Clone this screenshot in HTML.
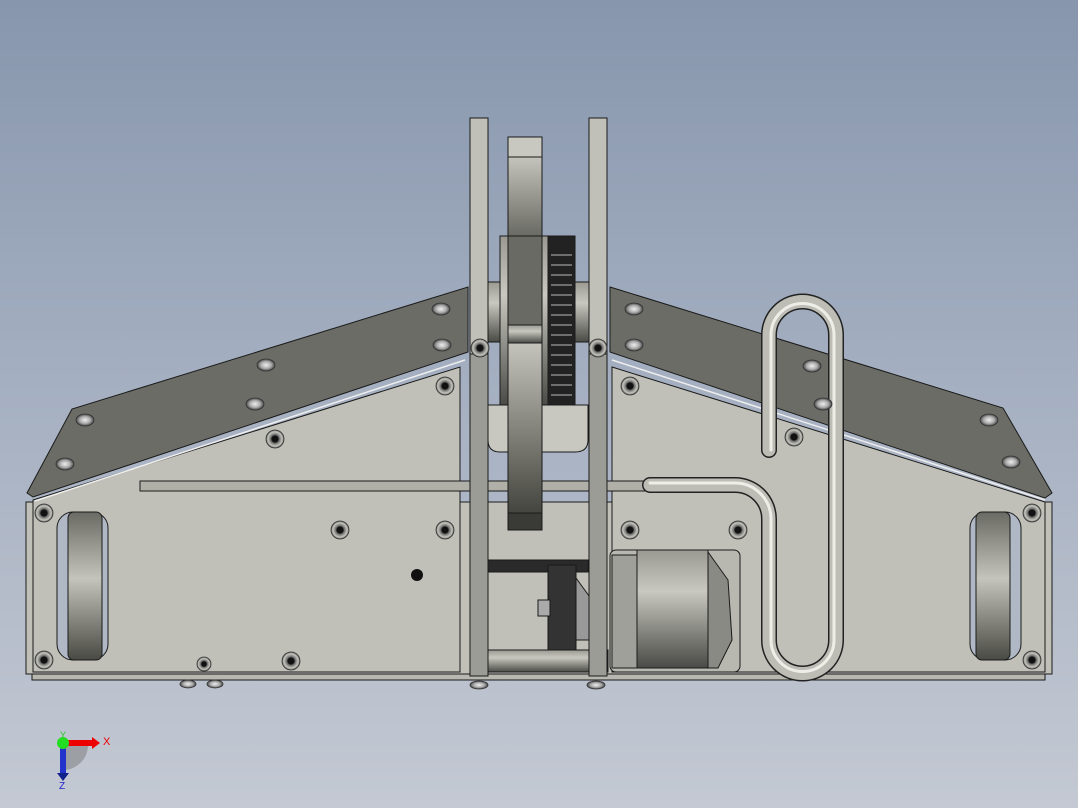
<!DOCTYPE html>
<html><head><style>
html,body{margin:0;padding:0;width:1078px;height:808px;overflow:hidden}
body{background:linear-gradient(#8796ad 0%,#a3aec0 45%,#c4c9d3 100%)}
svg{position:absolute;left:0;top:0}
text{font-family:"Liberation Sans",sans-serif}
</style></head><body>
<svg width="1078" height="808" viewBox="0 0 1078 808">
<defs>
<linearGradient id="cyl" x1="0" x2="0" y1="0" y2="1">
<stop offset="0" stop-color="#9a9a92"/><stop offset=".35" stop-color="#c8c8c0"/><stop offset="1" stop-color="#4a4a46"/></linearGradient>
<linearGradient id="whl" x1="0" x2="0" y1="0" y2="1">
<stop offset="0" stop-color="#6a6a64"/><stop offset=".45" stop-color="#c4c4bc"/><stop offset="1" stop-color="#4a4a44"/></linearGradient>
<linearGradient id="dg" x1="0" x2="0" y1="0" y2="1">
<stop offset="0" stop-color="#c4c4bc"/><stop offset="1" stop-color="#6a6a64"/></linearGradient>
<linearGradient id="dg2" x1="0" x2="0" y1="0" y2="1">
<stop offset="0" stop-color="#c4c4bc"/><stop offset="1" stop-color="#45453f"/></linearGradient>
<radialGradient id="scr"><stop offset=".35" stop-color="#111"/><stop offset=".45" stop-color="#666"/><stop offset=".8" stop-color="#c8c8c0"/><stop offset="1" stop-color="#555"/></radialGradient>
<radialGradient id="bt"><stop offset="0" stop-color="#eee"/><stop offset=".6" stop-color="#aaa"/><stop offset="1" stop-color="#444"/></radialGradient>
</defs>
<g stroke="#1a1a1a" stroke-width="1">
<rect x="26" y="502" width="1026" height="172" fill="#c0c0b8"/>
<rect x="32" y="674" width="1013" height="6" fill="#b8b8b0"/>
<polygon points="33,500 460,367 460,672 33,672" fill="#c0c0b8"/>
<polygon points="612,367 1045,502 1045,672 612,672" fill="#c0c0b8"/>
<polygon points="27,493 72,409 468,287 468,352 33,497" fill="#6c6c66"/>
<polygon points="610,287 1003,408 1052,493 1045,498 610,352" fill="#6c6c66"/>
<line x1="35" y1="501" x2="465" y2="360" stroke="#eee" stroke-width="1.5"/>
<line x1="612" y1="360" x2="1045" y2="500" stroke="#eee" stroke-width="1.5"/>
<rect x="57" y="512" width="51" height="148" rx="16" fill="#b0b8c6"/>
<rect x="68" y="512" width="34" height="148" rx="6" fill="url(#whl)"/>
<rect x="970" y="512" width="51" height="148" rx="16" fill="#b0b8c6"/>
<rect x="976" y="512" width="34" height="148" rx="6" fill="url(#whl)"/>
<rect x="140" y="481" width="510" height="10" fill="#b0b0a8"/>
<path d="M488,405 L588,405 L588,440 Q588,452 575,452 L500,452 Q488,452 488,440Z" fill="#c8c8c0"/>
<rect x="488" y="560" width="100" height="12" fill="#2a2a2a"/>
<rect x="488" y="650" width="120" height="22" fill="url(#cyl)"/>
<rect x="548" y="565" width="28" height="85" fill="#333"/>
<rect x="538" y="600" width="12" height="16" fill="#aaa"/>
<path d="M576,578 L592,600 L590,640 L576,640Z" fill="#999"/>
<rect x="610" y="550" width="130" height="122" rx="6" fill="#b8b8b0"/>
<rect x="612" y="555" width="25" height="113" fill="#a0a09a"/>
<rect x="637" y="550" width="71" height="118" fill="url(#cyl)"/>
<path d="M708,552 L728,580 L732,640 L718,668 L708,668Z" fill="#8a8a84"/>
<rect x="470" y="118" width="18" height="558" fill="#9c9c96"/>
<rect x="470" y="118" width="18" height="236" fill="#c0c0b8"/>
<rect x="589" y="118" width="18" height="558" fill="#9c9c96"/>
<rect x="589" y="118" width="18" height="236" fill="#c0c0b8"/>
<rect x="488" y="282" width="16" height="60" fill="url(#cyl)"/>
<rect x="575" y="282" width="14" height="60" fill="url(#cyl)"/>
<rect x="500" y="236" width="50" height="169" fill="url(#cyl)"/>
<rect x="548" y="236" width="27" height="169" fill="#222"/>
<g stroke="#bbb" stroke-width="1">
<line x1="551" y1="255" x2="572" y2="255"/><line x1="551" y1="265" x2="572" y2="265"/><line x1="551" y1="275" x2="572" y2="275"/><line x1="551" y1="285" x2="572" y2="285"/><line x1="551" y1="295" x2="572" y2="295"/><line x1="551" y1="305" x2="572" y2="305"/><line x1="551" y1="315" x2="572" y2="315"/><line x1="551" y1="325" x2="572" y2="325"/><line x1="551" y1="335" x2="572" y2="335"/><line x1="551" y1="345" x2="572" y2="345"/><line x1="551" y1="355" x2="572" y2="355"/><line x1="551" y1="365" x2="572" y2="365"/><line x1="551" y1="375" x2="572" y2="375"/><line x1="551" y1="385" x2="572" y2="385"/><line x1="551" y1="395" x2="572" y2="395"/>
</g>
<rect x="508" y="137" width="34" height="20" fill="#c8c8c0"/>
<rect x="508" y="157" width="34" height="79" fill="url(#dg)"/>
<rect x="508" y="236" width="34" height="89" fill="#6a6a64"/>
<rect x="508" y="325" width="34" height="18" fill="url(#cyl)"/>
<rect x="508" y="343" width="34" height="170" fill="url(#dg2)"/>
<rect x="508" y="513" width="34" height="17" fill="#3a3a36"/>
</g>
<g fill="none" stroke-linecap="round">
<path d="M650,485 L735,485 A34,34 0 0 1 769,519 L769,640 A33.5,33.5 0 0 0 836,640 L836,335 A33.5,33.5 0 0 0 769,335 L769,450" stroke="#222" stroke-width="16"/>
<path d="M650,485 L735,485 A34,34 0 0 1 769,519 L769,640 A33.5,33.5 0 0 0 836,640 L836,335 A33.5,33.5 0 0 0 769,335 L769,450" stroke="#bdbdb6" stroke-width="13"/>
<path d="M650,483 L735,483 A36,36 0 0 1 771,519 L771,640 A31.5,31.5 0 0 0 834,640 L834,335 A31.5,31.5 0 0 0 771,335 L771,450" stroke="#eeeee8" stroke-width="3"/>
</g>
<g stroke="#333" stroke-width=".8" fill="url(#scr)">
<circle cx="44" cy="513" r="9"/><circle cx="44" cy="660" r="9"/><circle cx="275" cy="439" r="9"/>
<circle cx="340" cy="530" r="9"/><circle cx="445" cy="530" r="9"/><circle cx="445" cy="386" r="9"/>
<circle cx="291" cy="661" r="9"/><circle cx="630" cy="530" r="9"/><circle cx="630" cy="386" r="9"/>
<circle cx="738" cy="530" r="9"/><circle cx="794" cy="437" r="9"/><circle cx="1032" cy="513" r="9"/>
<circle cx="1032" cy="660" r="9"/><circle cx="480" cy="348" r="9"/><circle cx="598" cy="348" r="9"/>
<circle cx="204" cy="664" r="7"/>
</g>
<circle cx="417" cy="575" r="6" fill="#111"/>
<g stroke="#333" stroke-width=".8" fill="url(#bt)">
<ellipse cx="85" cy="420" rx="9" ry="6"/><ellipse cx="65" cy="464" rx="9" ry="6"/>
<ellipse cx="266" cy="365" rx="9" ry="6"/><ellipse cx="255" cy="404" rx="9" ry="6"/>
<ellipse cx="441" cy="309" rx="9" ry="6"/><ellipse cx="442" cy="345" rx="9" ry="6"/>
<ellipse cx="634" cy="309" rx="9" ry="6"/><ellipse cx="634" cy="345" rx="9" ry="6"/>
<ellipse cx="812" cy="366" rx="9" ry="6"/><ellipse cx="823" cy="404" rx="9" ry="6"/>
<ellipse cx="989" cy="420" rx="9" ry="6"/><ellipse cx="1011" cy="462" rx="9" ry="6"/>
<ellipse cx="188" cy="684" rx="8" ry="4"/><ellipse cx="215" cy="684" rx="8" ry="4"/>
<ellipse cx="479" cy="685" rx="9" ry="4"/><ellipse cx="596" cy="685" rx="9" ry="4"/>
</g>
<path d="M63,745 L63,770 A25,25 0 0 0 88,745Z" fill="#777" opacity=".5"/>
<rect x="63" y="740" width="30" height="6" fill="#e00"/>
<polygon points="92,737 100,743 92,749" fill="#e00"/>
<rect x="60" y="744" width="6" height="30" fill="#2233cc"/>
<polygon points="57,773 69,773 63,781" fill="#11208a"/>
<circle cx="63" cy="743" r="6" fill="#22dd22"/>
<text x="103" y="745" font-size="11" fill="#e00">X</text>
<text x="60" y="738" font-size="9" fill="#2c2">Y</text>
<text x="59" y="789" font-size="10" fill="#22c">Z</text>
</svg>
</body></html>
